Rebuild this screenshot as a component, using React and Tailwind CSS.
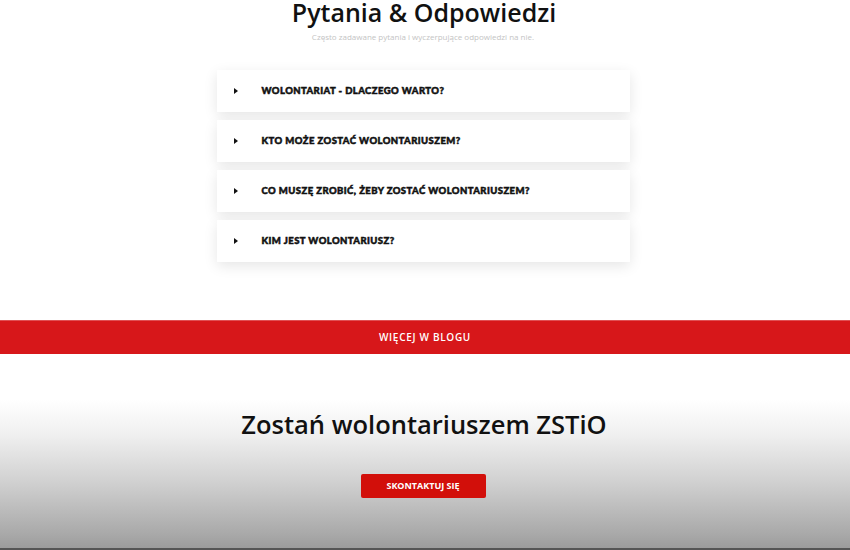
export default function App() {
  const items = [
    "WOLONTARIAT - DLACZEGO WARTO?",
    "KTO MOŻE ZOSTAĆ WOLONTARIUSZEM?",
    "CO MUSZĘ ZROBIĆ, ŻEBY ZOSTAĆ WOLONTARIUSZEM?",
    "KIM JEST WOLONTARIUSZ?",
  ];
  return (
    <div className="w-[850px] h-[550px] overflow-hidden bg-white flex flex-col" style={{ fontFamily: '"Open Sans", sans-serif' }}>
      <div className="flex flex-col items-center">
        <h1 className="mt-[-5px] mr-[2px] text-[25px] leading-[34px] font-semibold text-[#111]">
          Pytania &amp; Odpowiedzi
        </h1>
        <p className="mt-[1px] mr-[4px] text-[8px] leading-[14px] text-[#c4c4c4]">
          Często zadawane pytania i wyczerpujące odpowiedzi na nie.
        </p>
        <div className="mt-[26px] mr-[4px] w-[413px] flex flex-col gap-[8px]">
          {items.map((t) => (
            <div key={t} className="h-[42px] bg-white shadow-[0_4px_14px_rgba(0,0,0,0.10)] flex items-center pl-[17px]">
              <svg width="4" height="6" viewBox="0 0 4 6" className="shrink-0">
                <path d="M0 0 L4 3 L0 6 Z" fill="#111" />
              </svg>
              <span className="ml-[24px] text-[9.5px] font-black tracking-[0.045em] text-[#111] [-webkit-text-stroke:0.5px_#111]" style={{ fontFamily: 'Lato, sans-serif' }}>
                {t}
              </span>
            </div>
          ))}
        </div>
      </div>
      <div className="mt-[58px] h-[34px] shrink-0 bg-[#d7171a] border-t border-[#e05054] flex items-center justify-center">
        <span className="text-[10px] font-semibold tracking-[0.07em] text-white">WIĘCEJ W BLOGU</span>
      </div>
      <div className="flex-1 flex flex-col items-center bg-[linear-gradient(to_bottom,#ffffff_0px,#ffffff_46px,#f0f0f0_80px,#cfcfcf_130px,#a9a9a9_180px,#9c9c9c_194px)] border-b-[2px] border-[#555]">
        <h2 className="mt-[52px] mr-[2px] text-[25.5px] leading-[36px] font-semibold text-[#111]">
          Zostań wolontariuszem ZSTiO
        </h2>
        <div className="mt-[32px] mr-[4px] w-[125px] h-[24px] shrink-0 rounded-[2px] bg-[#d20f0a] flex items-center justify-center">
          <span className="text-[9px] font-bold text-white">SKONTAKTUJ SIĘ</span>
        </div>
      </div>
    </div>
  );
}
